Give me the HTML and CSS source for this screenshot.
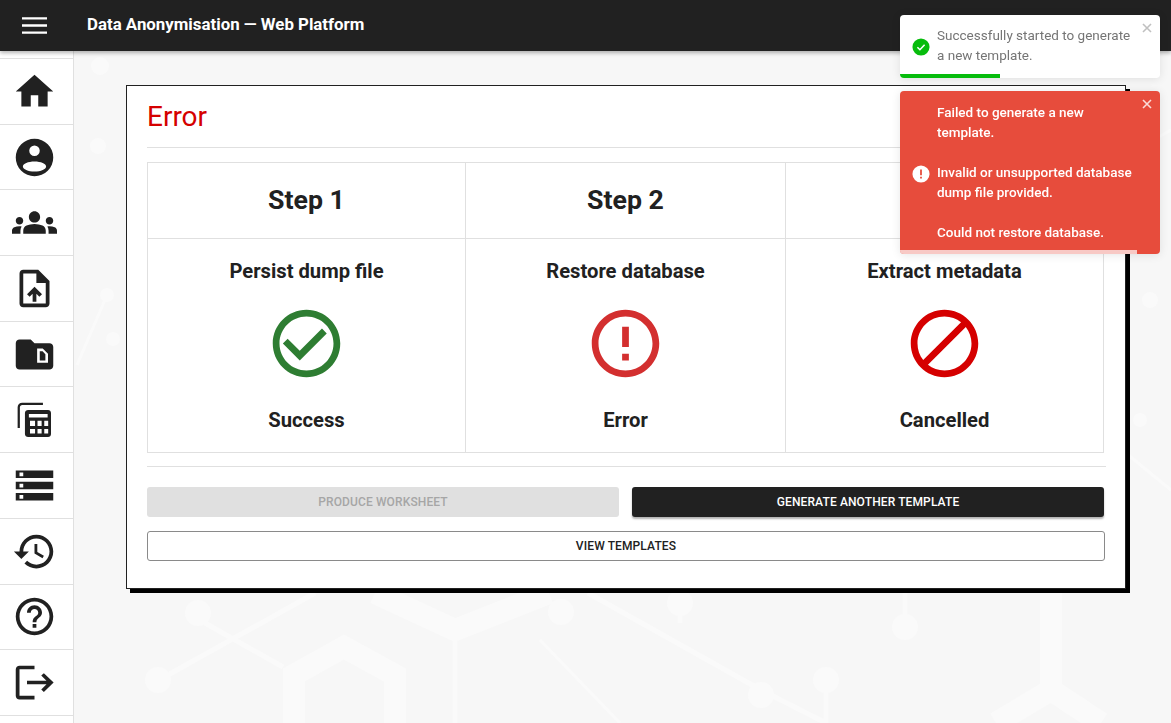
FILE: index.html
```html
<!DOCTYPE html>
<html lang="en">
<head>
    <meta charset="UTF-8">
    <meta name="viewport" content="width=device-width, initial-scale=1.0">
    <title>Data Anonymisation - Web Platform</title>
    <link rel="stylesheet" href="styles.css">
</head>
<body>

    <header class="topbar">
        <svg class="menu-icon" viewBox="0 0 24 24"><path d="M0 4h24v2.2H0zM0 10.9h24v2.2H0zM0 17.8h24V20H0z"/></svg>
        <span class="topbar-title">Data Anonymisation — Web Platform</span>
    </header>

    <div class="layout">
        <nav class="sidebar">
            <a class="side-item"><svg viewBox="0 0 24 24"><path d="M10 20v-6h4v6h5v-8h3L12 3 2 12h3v8z"/></svg></a>
            <a class="side-item"><svg viewBox="0 0 24 24"><path fill-rule="evenodd" d="M12 2a10 10 0 1 0 0 20 10 10 0 1 0 0-20zM12 5.600a2.800 2.800 0 1 1 0 5.600 2.800 2.800 0 1 1 0-5.600zM12 14.100c3.400 0 6.200 1.200 6.200 2.700s-2.800 2.700-6.200 2.700-6.200-1.200-6.200-2.700 2.800-2.700 6.200-2.700z"/></svg></a>
            <a class="side-item"><svg viewBox="0 0 24 24"><path d="M12 12.75c1.63 0 3.07.39 4.24.9 1.08.48 1.76 1.56 1.76 2.73V18H6v-1.61c0-1.18.68-2.26 1.76-2.73 1.17-.52 2.61-.91 4.24-.91zM4 13c1.1 0 2-.9 2-2s-.9-2-2-2-2 .9-2 2 .9 2 2 2zm1.13 1.1c-.37-.06-.74-.1-1.13-.1-.99 0-1.93.21-2.78.58C.48 14.9 0 15.62 0 16.43V18h4.5v-1.61c0-.83.23-1.61.63-2.29zM20 13c1.1 0 2-.9 2-2s-.9-2-2-2-2 .9-2 2 .9 2 2 2zm4 3.43c0-.81-.48-1.53-1.22-1.85-.85-.37-1.79-.58-2.78-.58-.39 0-.76.04-1.13.1.4.68.63 1.46.63 2.29V18H24v-1.57zM12 6c1.66 0 3 1.34 3 3s-1.34 3-3 3-3-1.34-3-3 1.34-3 3-3z"/></svg></a>
            <a class="side-item"><svg viewBox="0 0 24 24"><path d="M14 2H6c-1.1 0-1.99.9-1.99 2L4 20c0 1.1.89 2 1.99 2H18c1.1 0 2-.9 2-2V8l-6-6zm4 18H6V4h7v5h5v11zM8 15.01l1.41 1.41L11 14.84V19h2v-4.16l1.59 1.59L16 15.01 12.01 11 8 15.01z"/></svg></a>
            <a class="side-item"><svg viewBox="0 0 24 24"><path fill-rule="evenodd" d="M20 6h-8l-2-2H4c-1.1 0-1.99.9-1.99 2L2 18c0 1.1.9 2 2 2h16c1.1 0 2-.9 2-2V8c0-1.1-.9-2-2-2zM13.400 8.800h3l2.800 2.800v4.800h-5.800zM14.800 10.200v5h3v-3.400l-1.500-1.600z"/></svg></a>
            <a class="side-item"><svg viewBox="0 0 24 24"><path fill-rule="evenodd" d="M5.500 3h11v1.200h-11c-.8 0-1.300.5-1.300 1.300V16.500H3V5.500C3 4 4 3 5.500 3zM8.600 6.900h10.600c.9 0 1.600.7 1.600 1.600v11.200c0 .9-.7 1.600-1.600 1.600H8.600c-.9 0-1.700-.7-1.700-1.600V8.500c0-.9.8-1.600 1.700-1.600zM9 9v1.900h10V9zM9.600 12.600v2.800h2.700v-2.800zM13.600 12.600v2.800h2.200v-2.800zM17.200 12.600v2.800h2.100v-2.800zM9.600 17v2.500h2.700V17zM13.600 17v2.500h2.200V17zM17.200 17v2.500h2.100V17z"/></svg></a>
            <a class="side-item"><svg viewBox="0 0 24 24"><path d="M2 20h20v-4H2v4zm2-3h2v2H4v-2zM2 4v4h20V4H2zm4 3H4V5h2v2zm-4 7h20v-4H2v4zm2-3h2v2H4v-2z"/></svg></a>
            <a class="side-item"><svg viewBox="0 0 24 24"><path d="M13 3c-4.970 0-9 4.030-9 9H1l3.890 3.890.07.14L9 12H6c0-3.870 3.130-7 7-7s7 3.130 7 7-3.130 7-7 7c-1.930 0-3.680-.79-4.940-2.060l-1.420 1.420C8.270 19.990 10.510 21 13 21c4.970 0 9-4.030 9-9s-4.030-9-9-9zm-1 5v5l4.280 2.540.72-1.210-3.500-2.080V8H12z"/></svg></a>
            <a class="side-item"><svg viewBox="0 0 24 24"><path d="M11 18h2v-2h-2v2zm1-16C6.480 2 2 6.480 2 12s4.480 10 10 10 10-4.480 10-10S17.520 2 12 2zm0 18c-4.410 0-8-3.590-8-8s3.590-8 8-8 8 3.590 8 8-3.590 8-8 8zm0-14c-2.210 0-4 1.790-4 4h2c0-1.100.9-2 2-2s2 .9 2 2c0 2-3 1.750-3 5h2c0-2.250 3-2.500 3-5 0-2.210-1.790-4-4-4z"/></svg></a>
            <a class="side-item"><svg viewBox="0 0 24 24"><path d="M4 3h8v1.900H4v14.200h8V21H4c-1.100 0-2-.9-2-2V5c0-1.100.9-2 2-2zm13 4l5.200 5-5.200 5-1.400-1.300 2.800-2.750H8v-1.900h10.400l-2.800-2.750L17 7z"/></svg></a>
        </nav>

        <main class="content">
            <svg class="backdrop" viewBox="74 51 1097 672" preserveAspectRatio="none">
                <g class="backdrop-lines">
                    <path class="wide" d="M294 723V675l50-28 51 28v48M375 593l80 37 94-37M1051 593v97l-55 33M1051 690l50 33"/>
                    <path d="M455 630v93M588 593l173 97M315 593L159 680M205 623l78 44M761 690l65 33M680 593v30M905 593v34M826 680v43"/>
                    <path class="thin" d="M130 400l60 70-40 70M107 295l-30 70M540 640l80 83M1040 90l60 80 71-40M1110 300v140l61 50"/>
                </g>
                <g class="backdrop-dots">
                    <circle cx="100" cy="66" r="9"/><circle cx="98" cy="146" r="8"/><circle cx="107" cy="295" r="7"/><circle cx="113" cy="339" r="7"/>
                    <circle cx="198" cy="613" r="13"/><circle cx="158" cy="680" r="13"/><circle cx="561" cy="612" r="13"/><circle cx="680" cy="603" r="13"/>
                    <circle cx="905" cy="627" r="13"/><circle cx="761" cy="695" r="13"/><circle cx="826" cy="680" r="13"/>
                    <circle cx="1150" cy="300" r="8"/><circle cx="1140" cy="420" r="7"/>
                </g>
            </svg>

            <section class="card">
                <h2 class="card-title">Error</h2>
                <hr class="divider">
                <table class="steps">
                    <tr>
                        <th>Step 1</th>
                        <th>Step 2</th>
                        <th>Step 3</th>
                    </tr>
                    <tr>
                        <td>
                            <div class="step-name">Persist dump file</div>
                            <svg class="status-icon success" viewBox="0 0 24 24"><path d="M12 2C6.480 2 2 6.480 2 12s4.480 10 10 10 10-4.480 10-10S17.520 2 12 2zm0 18c-4.410 0-8-3.590-8-8s3.590-8 8-8 8 3.590 8 8-3.590 8-8 8z"/><path d="M16.590 7.580L10 14.170l-3.590-3.580L5 12l5 5 8-8z"/></svg>
                            <div class="step-status">Success</div>
                        </td>
                        <td>
                            <div class="step-name">Restore database</div>
                            <svg class="status-icon failed" viewBox="0 0 24 24"><path d="M11 15h2v2h-2zm0-8h2v6h-2zm.99-5C6.470 2 2 6.480 2 12s4.470 10 9.990 10C17.520 22 22 17.520 22 12S17.520 2 11.990 2zM12 20c-4.420 0-8-3.580-8-8s3.580-8 8-8 8 3.580 8 8-3.580 8-8 8z"/></svg>
                            <div class="step-status">Error</div>
                        </td>
                        <td>
                            <div class="step-name">Extract metadata</div>
                            <svg class="status-icon cancelled" viewBox="0 0 24 24"><path d="M12 2C6.480 2 2 6.480 2 12s4.480 10 10 10 10-4.480 10-10S17.520 2 12 2zM4 12c0-4.420 3.580-8 8-8 1.850 0 3.550.63 4.900 1.690L5.690 16.900C4.630 15.550 4 13.850 4 12zm8 8c-1.850 0-3.550-.63-4.900-1.690L18.310 7.100C19.370 8.450 20 10.150 20 12c0 4.420-3.580 8-8 8z"/></svg>
                            <div class="step-status">Cancelled</div>
                        </td>
                    </tr>
                </table>
                <hr class="divider divider-low">
                <div class="actions">
                    <button class="btn btn-disabled">Produce worksheet</button>
                    <button class="btn btn-dark">Generate another template</button>
                </div>
                <button class="btn btn-outline">View templates</button>
            </section>
        </main>
    </div>

    <div class="toasts">
        <div class="toast toast-success">
            <svg class="toast-icon" viewBox="0 0 20 20"><circle cx="10" cy="10" r="9.500" fill="#07bc0c"/><path d="M6 10.300l2.800 2.700L14 7.500" fill="none" stroke="#fff" stroke-width="1.700"/></svg>
            <div class="toast-body">Successfully started to generate a new template.</div>
            <svg class="toast-close" viewBox="0 0 10 10"><path d="M1 1l8 8M9 1l-8 8"/></svg>
            <div class="toast-bar bar-success"></div>
        </div>
        <div class="toast toast-error">
            <svg class="toast-icon" viewBox="0 0 20 20"><circle cx="10" cy="10" r="9.500" fill="#fff"/><path d="M9 5h2v6.500H9zM9 13h2v2H9z" fill="#e74c3c"/></svg>
            <div class="toast-body">
                Failed to generate a new template.<br><br>
                Invalid or unsupported database dump file provided.<br><br>
                Could not restore database.
            </div>
            <svg class="toast-close" viewBox="0 0 10 10"><path d="M1 1l8 8M9 1l-8 8"/></svg>
            <div class="toast-bar bar-error"></div>
        </div>
    </div>

</body>
</html>
```

FILE: styles.css
```css
* {
    box-sizing: border-box;
}

body {
    margin: 0;
    height: 723px;
    overflow: hidden;
    font-family: Roboto, "Liberation Sans", sans-serif;
    color: #212121;
    background-color: #f7f7f7;
}

.topbar {
    position: relative;
    z-index: 2;
    display: flex;
    align-items: center;
    height: 51px;
    padding-left: 22px;
    background-color: #212121;
    color: #fff;
    box-shadow: 0 2px 4px rgba(0, 0, 0, 0.3);
}

.menu-icon {
    width: 25px;
    height: 25px;
    fill: #fff;
}

.topbar-title {
    margin: 0 0 3px 40px;
    font-size: 16.85px;
    font-weight: 700;
}

.layout {
    display: flex;
    height: 672px;
}

.sidebar {
    flex: 0 0 74px;
    padding-top: 7px;
    background-color: #fff;
    border-right: 1px solid #e0e0e0;
}

.side-item {
    display: flex;
    align-items: center;
    justify-content: center;
    height: 65.7px;
    padding-right: 4px;
    border-bottom: 1px solid #e0e0e0;
}

.side-item:first-child {
    height: 66.7px;
    border-top: 1px solid #e0e0e0;
}

.side-item svg {
    width: 45px;
    height: 45px;
    fill: #212121;
}

.content {
    position: relative;
    flex: 1;
    padding: 34px 0 0 52px;
}

.backdrop {
    position: absolute;
    left: 0;
    top: 0;
    width: 100%;
    height: 100%;
}

.backdrop-lines path {
    fill: none;
    stroke: #fafafa;
    stroke-width: 5;
}

.backdrop-lines .wide {
    stroke-width: 22;
}

.backdrop-lines .thin {
    stroke-width: 3;
}

.backdrop-dots circle {
    fill: #fafafa;
}

.card {
    position: relative;
    width: 1000px;
    height: 504px;
    padding: 13px 20px 0;
    background-color: #fff;
    border: 1px solid #212121;
    box-shadow: 4px 4px 0 #000;
}

.card-title {
    margin: 0;
    font-size: 28px;
    font-weight: 400;
    line-height: 36px;
    color: #d50000;
}

.divider {
    margin: 12px -1px 14px 0;
    border: 0;
    border-top: 1px solid #e0e0e0;
}

.divider-low {
    margin: 13px -1px 20px 0;
}

.steps {
    width: 957px;
    table-layout: fixed;
    border-collapse: collapse;
}

.steps th, .steps td {
    border: 1px solid #e0e0e0;
    text-align: center;
}

.steps th {
    height: 76px;
    padding-bottom: 2px;
    font-size: 26.7px;
    font-weight: 700;
}

.steps th:first-child {
    width: 318px;
}

.steps th:nth-child(2) {
    width: 320px;
}

.steps td {
    height: 214px;
    padding: 20px 0 0;
    vertical-align: top;
}

.step-name, .step-status {
    font-size: 20.2px;
    font-weight: 700;
    line-height: 24px;
}

.status-icon {
    display: block;
    width: 81px;
    height: 81px;
    margin: 20px auto 24px;
}

.success {
    fill: #2e7d32;
}

.failed {
    fill: #d32f2f;
}

.cancelled {
    fill: #d50000;
}

.actions {
    display: flex;
    gap: 13px;
    margin-bottom: 14px;
}

.btn {
    display: block;
    height: 30px;
    padding: 0;
    border: none;
    border-radius: 3px;
    font-family: inherit;
    font-size: 12px;
    font-weight: 500;
    text-transform: uppercase;
    letter-spacing: 0.01em;
}

.actions .btn {
    flex: 0 0 472px;
}

.btn-disabled {
    background-color: #e0e0e0;
    color: #a6a6a6;
}

.btn-dark {
    background-color: #212121;
    color: #fff;
    box-shadow: 0 2px 2px rgba(0, 0, 0, 0.3);
}

.btn-outline {
    width: 958px;
    background-color: #fff;
    border: 1px solid #8a8a8a;
    color: #212121;
}

.toasts {
    position: fixed;
    top: 15px;
    left: 900px;
    z-index: 5;
    width: 260px;
}

.toast {
    position: relative;
    display: flex;
    align-items: center;
    margin-bottom: 13px;
    padding: 10px 20px 13px 12px;
    border-radius: 4px;
    font-size: 13.5px;
    line-height: 20px;
    overflow: hidden;
    box-shadow: 0 1px 10px rgba(0, 0, 0, 0.1);
}

.toast-success {
    background-color: #fff;
    color: #757575;
}

.toast-error {
    padding: 11px 20px 12px 12px;
    background-color: #e74c3c;
    color: #fff;
    font-weight: 500;
}

.toast-icon {
    flex: 0 0 18px;
    width: 18px;
    height: 18px;
    margin: 3px 7px 0 0;
}

.toast-close {
    position: absolute;
    top: 8px;
    right: 8px;
    width: 10px;
    height: 10px;
    fill: none;
    stroke: currentColor;
    stroke-width: 1.6;
    opacity: 0.45;
}

.toast-error .toast-close {
    opacity: 0.8;
}

.toast-bar {
    position: absolute;
    left: 0;
    bottom: 0;
    height: 4px;
}

.bar-success {
    width: 100px;
    background-color: #07bc0c;
}

.bar-error {
    width: 237px;
    background-color: rgba(255, 255, 255, 0.7);
}
```
